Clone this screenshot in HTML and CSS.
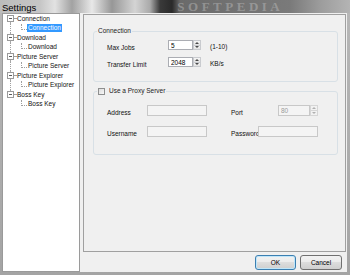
FILE: index.html
```html
<!DOCTYPE html>
<html lang="en">
<head>
    <meta charset="UTF-8">
    <title>Settings</title>
    <link rel="stylesheet" href="styles.css">
</head>
<body>

    <div class="window">
        <div class="titlebar">
            <span class="title">Settings</span>
            <span class="mark">SOFTPEDIA</span>
        </div>

        <div class="client">
            <!-- Left tree -->
            <div class="tree">
                <div class="node first">
                    <div class="row parent"><span class="exp"></span><span class="dash"></span><span class="label">Connection</span></div>
                    <div class="row child"><span class="trunk"></span><span class="elbow"></span><span class="label selected">Connection</span></div>
                </div>
                <div class="node">
                    <div class="row parent"><span class="exp"></span><span class="dash"></span><span class="label">Download</span></div>
                    <div class="row child"><span class="trunk"></span><span class="elbow"></span><span class="label">Download</span></div>
                </div>
                <div class="node">
                    <div class="row parent"><span class="exp"></span><span class="dash"></span><span class="label">Picture Server</span></div>
                    <div class="row child"><span class="trunk"></span><span class="elbow"></span><span class="label">Picture Server</span></div>
                </div>
                <div class="node">
                    <div class="row parent"><span class="exp"></span><span class="dash"></span><span class="label">Picture Explorer</span></div>
                    <div class="row child"><span class="trunk"></span><span class="elbow"></span><span class="label">Picture Explorer</span></div>
                </div>
                <div class="node last">
                    <div class="row parent"><span class="exp"></span><span class="dash"></span><span class="label">Boss Key</span></div>
                    <div class="row child"><span class="trunk"></span><span class="elbow"></span><span class="label">Boss Key</span></div>
                </div>
            </div>

            <!-- Right page -->
            <div class="main">
                <div class="page">
                    <fieldset class="group conn">
                        <legend>Connection</legend>
                        <div class="grid conn-grid">
                            <label>Max Jobs</label>
                            <div class="spin"><input type="text" value="5"><span class="arrows"><i class="up"></i><i class="down"></i></span></div>
                            <span class="unit">(1-10)</span>

                            <label>Transfer Limit</label>
                            <div class="spin"><input type="text" value="2048"><span class="arrows"><i class="up"></i><i class="down"></i></span></div>
                            <span class="unit">KB/s</span>
                        </div>
                    </fieldset>

                    <fieldset class="group proxy">
                        <legend><input type="checkbox" class="check"><span>Use a Proxy Server</span></legend>
                        <div class="grid proxy-grid">
                            <label>Address</label>
                            <input type="text" class="box" disabled>
                            <label>Port</label>
                            <div class="spin off port"><input type="text" value="80" disabled><span class="arrows"><i class="up"></i><i class="down"></i></span></div>

                            <label>Username</label>
                            <input type="text" class="box" disabled>
                            <label>Password</label>
                            <input type="text" class="box" disabled>
                        </div>
                    </fieldset>
                </div>

                <div class="buttons">
                    <button class="btn default">OK</button>
                    <button class="btn">Cancel</button>
                </div>
            </div>
        </div>
    </div>

</body>
</html>
```

FILE: styles.css
```css
body {
    margin: 0;
    width: 350px;
    height: 275px;
    overflow: hidden;
    font-family: 'Liberation Sans', Arial, sans-serif;
    font-size: 6.5px;
    color: #111;
    background: linear-gradient(180deg, #b8b8b8, #a4a4a4);
}
.window {
    display: flex;
    flex-direction: column;
    height: 275px;
}

/* Title bar */
.titlebar {
    height: 13px;
    display: flex;
    align-items: center;
    background: linear-gradient(90deg, #bcbcbc 0, #c6c6c6 40px, #e2e2e2 55px, #a2a2a2 72px, #e8e8e8 92px, #979797 112px, #d4d4d4 135px, #aaaaaa 150px, #3a3a3a 160px, #2a2a2a 172px, #6a6a6a 180px, #7a7a7a 290px, #9c9c9c 320px, #b4b4b4 350px);
}
.title {
    font-size: 9.5px;
    color: #000;
    padding-left: 2px;
    padding-top: 1px;
}
.mark {
    margin-left: 141px;
    font-family: 'Liberation Serif', serif;
    font-size: 13px;
    font-weight: bold;
    letter-spacing: 3.5px;
    color: rgba(205, 205, 205, 0.4);
}

.client {
    display: flex;
    height: 259px;
    margin: 0 3px 0 2px;
    background-color: #f0f0f0;
}

/* Tree */
.tree {
    width: 76px;
    background-color: #fff;
    border: 1px solid #9a9a9a;
}
.row {
    display: flex;
    align-items: center;
    height: 9.5px;
    white-space: nowrap;
}
.parent {
    background: linear-gradient(#a8a8a8, #a8a8a8) 7px 0 / 1px 100% no-repeat;
}
.node.first .parent {
    background-position: 7px 100%;
    background-size: 1px 50%;
}
.node.last .parent {
    background-size: 1px 50%;
}
.exp {
    width: 5px;
    height: 5px;
    margin-left: 4px;
    border: 1px solid #9a9a9a;
    background: linear-gradient(#5a5a5a, #5a5a5a) center / 3px 1px no-repeat, #fff;
}
.dash {
    width: 2px;
    border-top: 1px dotted #a0a0a0;
}
.label {
    padding: 0 1px;
    line-height: 8px;
}
.label.selected {
    background-color: #3399ff;
    color: #fff;
}
.child {
    align-items: stretch;
}
.trunk {
    width: 7px;
    border-right: 1px dotted #a0a0a0;
}
.node.last .trunk {
    border-right-color: transparent;
}
.elbow {
    width: 5px;
    height: 5px;
    margin-left: 10px;
    border-left: 1px dotted #a0a0a0;
    border-bottom: 1px dotted #a0a0a0;
}
.child .label {
    align-self: center;
}

/* Right side */
.main {
    flex: 1;
    display: flex;
    flex-direction: column;
    margin-left: 3px;
    margin-right: 1px;
    padding-top: 1px;
}
.page {
    height: 224px;
    border: 1px solid #a0a0a0;
    padding: 12px 7px 0 9px;
    background-color: #f0f0f0;
}
.group {
    margin: 0;
    border: 1px solid #d8e0e6;
    border-radius: 3px;
    padding: 5px 0 14px 13px;
}
.group legend {
    padding: 0 1px;
    margin-left: -10px;
    line-height: 8px;
    color: #222;
    display: flex;
    align-items: center;
}
.group.proxy {
    margin-top: 5px;
    padding-top: 10px;
    padding-bottom: 17px;
}
.check {
    appearance: none;
    margin: 0 4px 0 0;
    width: 7px;
    height: 7px;
    border: 1px solid #8e8f8f;
    background: linear-gradient(135deg, #dcdcdc, #f8f8f8);
}

.grid {
    display: grid;
    align-items: start;
}
.grid label {
    line-height: 10px;
    padding-top: 3px;
}
.conn-grid {
    grid-template-columns: 61px 33px auto;
    grid-template-rows: 10px 10px;
    row-gap: 7px;
}
.unit {
    margin-left: 9px;
    line-height: 10px;
    padding-top: 2px;
}
.proxy-grid {
    grid-template-columns: 40px 84px 27px 60px;
    grid-template-rows: 11px 11px;
    row-gap: 10px;
}

/* Inputs */
input[type="text"] {
    box-sizing: border-box;
    margin: 0;
    padding: 0 2px;
    border: 1px solid #abadb3;
    background: #fff;
    font: inherit;
    color: #000;
    height: 100%;
    outline: none;
}
.box {
    width: 60px;
}
input.box:disabled {
    background-color: #f4f4f4;
    border-color: #c8c8c8;
}
.spin {
    display: flex;
    height: 100%;
}
.spin input {
    flex: 1;
    width: 0;
    line-height: 8px;
}
.arrows {
    width: 8px;
    display: flex;
    flex-direction: column;
}
.arrows i {
    flex: 1;
    display: flex;
    align-items: center;
    justify-content: center;
    background: linear-gradient(#f6f6f6, #e2e2e2);
    border: 1px solid #c9cbcf;
}
.arrows i + i {
    border-top: none;
}
.arrows .up::after {
    content: '';
    border-left: 2px solid transparent;
    border-right: 2px solid transparent;
    border-bottom: 2px solid #4a4a4a;
}
.arrows .down::after {
    content: '';
    border-left: 2px solid transparent;
    border-right: 2px solid transparent;
    border-top: 2px solid #4a4a4a;
}
.spin.port {
    width: 40px;
    justify-self: end;
}
.spin.off input {
    background-color: #f4f4f4;
    border-color: #c8c8c8;
    color: #9a9a9a;
}
.spin.off .arrows i {
    background: #f2f2f2;
    border-color: #d6d6d6;
}
.spin.off .arrows i::after {
    border-bottom-color: #b0b0b0;
    border-top-color: #b0b0b0;
}

/* Buttons */
.buttons {
    display: flex;
    justify-content: flex-end;
    gap: 4px;
    margin-top: 3px;
    padding-right: 4px;
}
.btn {
    height: 15px;
    width: 42px;
    padding: 0;
    font: inherit;
    color: #000;
    border: 1px solid #707070;
    border-radius: 3px;
    background: linear-gradient(#f2f2f2 0, #ebebeb 50%, #dddddd 50%, #cfcfcf 100%);
}
.btn.default {
    width: 41px;
    border-color: #3c7fb1;
    box-shadow: inset 0 0 0 1px #bfe6fa;
}
```
